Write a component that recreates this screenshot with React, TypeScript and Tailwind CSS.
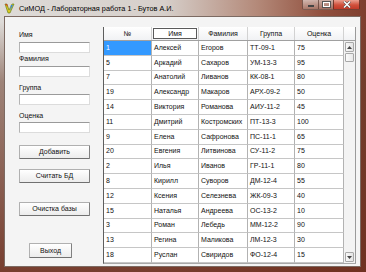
import React from "react";

const rows: string[][] = [
  ["1", "Алексей", "Егоров", "ТТ-09-1", "75"],
  ["5", "Аркадий", "Сахаров", "УМ-13-3", "95"],
  ["7", "Анатолий", "Ливанов", "КК-08-1", "80"],
  ["19", "Александр", "Макаров", "АРХ-09-2", "50"],
  ["14", "Виктория", "Романова", "АИУ-11-2", "45"],
  ["11", "Дмитрий", "Костромских", "ПТ-13-3", "100"],
  ["9", "Елена", "Сафронова", "ПС-11-1", "65"],
  ["20", "Евгения", "Литвинова", "СУ-11-2", "75"],
  ["2", "Илья", "Иванов", "ГР-11-1", "80"],
  ["8", "Кирилл", "Суворов", "ДМ-12-4", "55"],
  ["12", "Ксения", "Селезнева", "ЖК-09-3", "40"],
  ["15", "Наталья", "Андреева", "ОС-13-2", "10"],
  ["3", "Роман", "Лебедь", "ММ-12-2", "90"],
  ["13", "Регина", "Маликова", "ЛМ-12-3", "30"],
  ["18", "Руслан", "Свиридов", "ФО-12-4", "15"],
];

const widths = [48, 47, 49, 47, 49];
const headers = ["№", "Имя", "Фамилия", "Группа", "Оценка"];

function Label({ text, className }: { text: string; className: string }) {
  return (
    <div className={"h-[8px] leading-[8px] text-[7px] text-[#111] " + className}>{text}</div>
  );
}

function Input({ className }: { className: string }) {
  return (
    <div
      className={
        "h-[11px] w-[71px] bg-white border border-t-[#9a9a9a] border-l-[#b4b4b4] border-r-[#dcdcdc] border-b-[#dcdcdc] " +
        className
      }
    />
  );
}

function Btn({ text, className }: { text: string; className: string }) {
  return (
    <div
      className={
        "flex items-center justify-center text-[7px] leading-[8px] text-[#111] rounded-[1px] border border-[#b0b0b0] border-b-[#707070] border-r-[#808080] bg-[linear-gradient(to_bottom,#ffffff,#ececec)] " +
        className
      }
    >
      {text}
    </div>
  );
}

export default function App() {
  return (
    <div className="w-[366px] h-[272px] overflow-hidden flex flex-col [font-family:'Liberation_Sans',Arial,sans-serif] [background:linear-gradient(to_bottom,rgba(0,0,0,0)_0%,rgba(0,0,0,0)_8%,rgba(105,60,42,0.55)_30%,rgba(110,48,32,0.92)_100%),linear-gradient(to_right,#dedbd8_0%,#d6cfca_45%,#b48a7a_70%,#91503e_88%,#7e3f2f_100%)]">
      {/* title bar */}
      <div className="h-[16px] shrink-0 flex items-start">
        <svg className="ml-[4px] mt-[3px]" width="11" height="11" viewBox="0 0 11 11">
          <path d="M1 1 L4 10 L6 10 L10 1 L8 1 L5 7 L3 1 Z" fill="#d8c820" stroke="#5a7a10" strokeWidth="0.6" />
          <path d="M7 2 L9 2 L6 8 Z" fill="#3a8ad8" />
          <path d="M1 1 L3 1 L4 4 Z" fill="#d04020" />
        </svg>
        <span className="ml-[4px] mt-[4px] text-[7.3px] leading-[9px] text-black whitespace-nowrap">
          СиМОД - Лабораторная работа 1 - Бутов А.И.
        </span>
        <div className="ml-auto mr-[6px] flex h-[10px]">
          <div className="w-[17px] h-full flex items-end justify-center pb-[2px] border border-t-0 border-[#5a3a30]/70 rounded-bl-[2px] bg-[linear-gradient(to_bottom,rgba(255,255,255,0.55),rgba(200,170,160,0.35))]">
            <div className="w-[6px] h-[2px] bg-white border-[0.5px] border-[#444]" />
          </div>
          <div className="w-[14px] h-full flex items-center justify-center border-b border-[#5a3a30]/70 bg-[linear-gradient(to_bottom,rgba(255,255,255,0.55),rgba(200,170,160,0.35))]">
            <div className="w-[7px] h-[5px] border-[1.5px] border-white outline outline-[0.5px] outline-[#555]" />
          </div>
          <div className="w-[27px] h-full flex items-center justify-center border border-t-0 border-[#5a2a20]/80 rounded-br-[2px] bg-[linear-gradient(to_bottom,#eaa090,#d0503c_55%,#c03a28)]">
            <svg width="8" height="7" viewBox="0 0 8 7">
              <path d="M1 0.5 L7 6.5 M7 0.5 L1 6.5" stroke="#444" strokeWidth="2.4" />
              <path d="M1 0.5 L7 6.5 M7 0.5 L1 6.5" stroke="#fff" strokeWidth="1.5" />
            </svg>
          </div>
        </div>
      </div>

      {/* client area */}
      <div className="flex-1 min-h-0 flex ml-[4px] mr-[5px] mb-[5px] bg-[#f4f4f4] border border-[#7c6a62] overflow-hidden">
        {/* left panel */}
        <div className="w-[98px] shrink-0 flex flex-col pl-[14px]">
          <Label text="Имя" className="mt-[14px]" />
          <Input className="mt-[3px]" />
          <Label text="Фамилия" className="mt-[2px]" />
          <Input className="mt-[3px]" />
          <Label text="Группа" className="mt-[7px]" />
          <Input className="mt-[2px]" />
          <Label text="Оценка" className="mt-[7px]" />
          <Input className="mt-[2px]" />
          <Btn text="Добавить" className="mt-[12px] w-[71px] h-[14px]" />
          <Btn text="Считать БД" className="mt-[10px] w-[71px] h-[14px]" />
          <Btn text="Очистка базы" className="mt-[19px] w-[71px] h-[14px]" />
          <Btn text="Выход" className="mt-[27px] ml-[10px] w-[43px] h-[15px]" />
        </div>

        {/* grid */}
        <div className="mt-[10px] w-[253px] h-[237px] shrink-0 flex bg-white border-l border-[#5e5e5e] border-b border-b-[#a8a8a8]">
          <div className="w-[240px] flex flex-col">
            <div className="h-[14px] flex border-b border-[#a0a0a0] bg-[linear-gradient(to_bottom,#ffffff,#f1f2f4)]">
              {headers.map((h, i) => (
                <div
                  key={h}
                  style={{ width: widths[i] }}
                  className="h-full flex border-r border-[#d2d2d2] text-[7px] leading-[8px] text-[#111]"
                >
                  {i === 1 ? (
                    <div className="ml-[1px] mt-[1px] w-[44px] h-[11px] border border-[#5a5a5a] bg-white flex items-center justify-center">
                      {h}
                    </div>
                  ) : (
                    <div className="w-full h-full flex items-center justify-center">{h}</div>
                  )}
                </div>
              ))}
            </div>
            {rows.map((r, ri) => (
              <div key={ri} className="h-[14.8px] flex shrink-0">
                {r.map((c, ci) => {
                  const sel = ri === 0 && ci === 0;
                  return (
                    <div
                      key={ci}
                      style={{ width: widths[ci] }}
                      className={
                        "h-full flex items-center pl-[2px] border-r border-b border-r-[#b2b2b2] border-b-[#c6c6c6] text-[7px] leading-[8px] whitespace-nowrap overflow-hidden " +
                        (sel ? "bg-[#3399ff] text-white" : "text-[#111]")
                      }
                    >
                      {c}
                    </div>
                  );
                })}
              </div>
            ))}
          </div>
          {/* scrollbar */}
          <div className="w-[12px] flex flex-col border-r border-[#9a9a9a]">
            <div className="h-[14px] shrink-0 bg-[linear-gradient(to_bottom,#ffffff,#f1f2f4)] border-b border-[#a0a0a0]" />
            <div className="flex-1 flex flex-col items-start pl-[1px] bg-[#f3f3f3]">
              <div className="mt-[1px] w-[9px] h-[10px] border border-[#a8a8a8] rounded-[1px] bg-[linear-gradient(to_right,#f8f8f8,#e4e4e4)] flex items-center justify-center">
                <svg width="5" height="3" viewBox="0 0 5 3">
                  <path d="M0 3 L2.5 0 L5 3 Z" fill="#444" />
                </svg>
              </div>
              <div className="mt-[1px] w-[9px] h-[9px] border border-[#a8a8a8] rounded-[1px] bg-[linear-gradient(to_right,#fbfbfb,#e8e8e8)]" />
              <div className="flex-1" />
              <div className="mb-[1px] w-[9px] h-[10px] border border-[#a8a8a8] rounded-[1px] bg-[linear-gradient(to_right,#f8f8f8,#e4e4e4)] flex items-center justify-center">
                <svg width="5" height="3" viewBox="0 0 5 3">
                  <path d="M0 0 L2.5 3 L5 0 Z" fill="#444" />
                </svg>
              </div>
            </div>
          </div>
        </div>
      </div>
    </div>
  );
}
